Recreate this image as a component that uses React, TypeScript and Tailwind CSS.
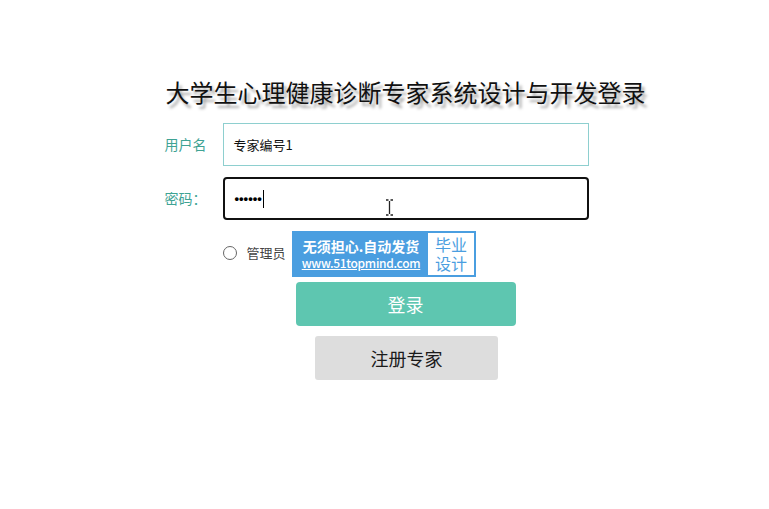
import React from 'react';

const cjk = '"Microsoft YaHei", "Noto Sans CJK SC", "Liberation Sans", sans-serif';

const Badge: React.FC = () => (
  <div className="absolute left-[292px] top-[231px] flex h-[46px] w-[184px] bg-[#4a9ee0] p-[2px]">
    <div className="flex w-[134px] flex-col items-center justify-center overflow-hidden leading-none text-white">
      <span className="text-[14px] font-bold">无须担心.自动发货</span>
      <span className="mt-[4px] text-[12px] font-medium tracking-[-0.3px] underline">www.51topmind.com</span>
    </div>
    <div className="flex flex-1 flex-col items-center justify-center bg-white text-[16px] leading-[19px] text-[#4a9ee0]">
      <span>毕业</span>
      <span>设计</span>
    </div>
  </div>
);

const IBeam: React.FC = () => (
  <svg className="absolute left-[385px] top-[199px]" width="9" height="17" viewBox="0 0 9 17">
    <path d="M1 1h2.5M5.5 1H8M4.5 2v13M1 16h2.5M5.5 16H8" stroke="#222" strokeWidth="1.3" fill="none" />
  </svg>
);

export default function App() {
  return (
    <div className="relative min-h-[509px] w-full bg-white" style={{ fontFamily: cjk }}>
      <div className="flex flex-col items-center pl-[42px] pt-[78px]">
        <h1
          className="text-[24px] leading-[28px] text-[#111]"
          style={{ textShadow: '3px 4px 3px rgba(0,0,0,0.35)' }}
        >
          大学生心理健康诊断专家系统设计与开发登录
        </h1>

        <div className="mr-[58px] mt-[17px] w-[424px]">
          <div className="flex items-center">
            <label className="w-[58px] text-[14px] text-[#3fa394]">用户名</label>
            <div className="flex h-[43px] w-[366px] items-center border border-[#8ecfcf] px-[10px] text-[13px] text-[#111]">
              专家编号1
            </div>
          </div>
          <div className="mt-[11px] flex items-center">
            <label className="w-[58px] text-[14px] text-[#3fa394]">密码：</label>
            <div className="flex h-[43px] w-[366px] items-center rounded-[4px] border-2 border-[#111] px-[10px]">
              <span className="font-['Liberation_Sans'] text-[13px] font-bold leading-none text-black">••••••</span>
              <span className="ml-[1px] h-[18px] w-[1px] bg-black" />
            </div>
          </div>
          <div className="ml-[58px] mt-[26px] flex h-[14px] items-center">
            <span className="h-[14px] w-[14px] rounded-full border border-[#666]" />
            <span className="ml-[10px] text-[13px] text-[#444]">管理员</span>
          </div>
        </div>

        <button className="mt-[22px] h-[44px] w-[220px] rounded-[4px] bg-[#5ec6b0] text-[18px] text-white">
          登录
        </button>
        <button className="ml-[2px] mt-[10px] h-[44px] w-[183px] rounded-[3px] bg-[#dddddd] text-[18px] text-[#1a1a1a]">
          注册专家
        </button>
      </div>
      <Badge />
      <IBeam />
    </div>
  );
}
